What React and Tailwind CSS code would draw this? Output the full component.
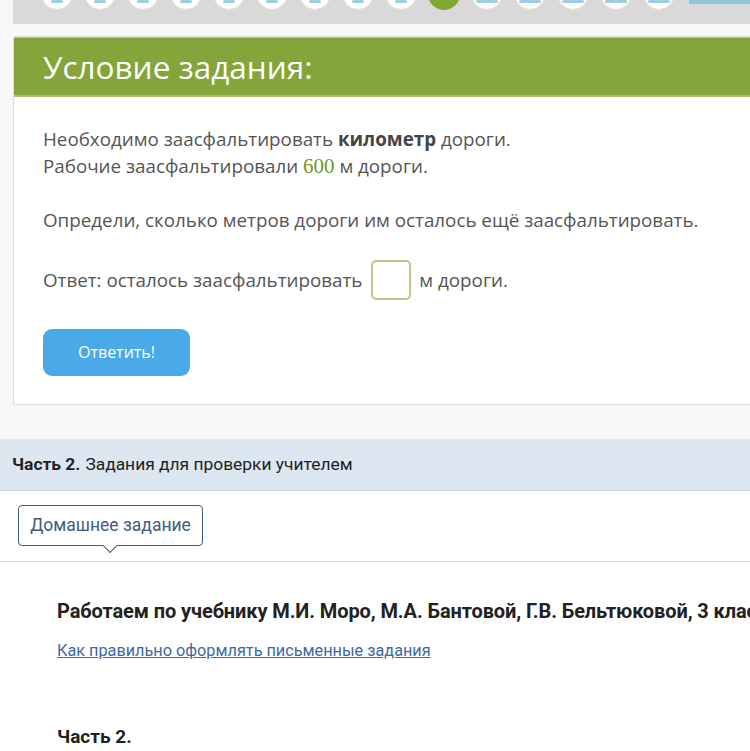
import React from "react";

const Circle = ({ active, wide }) => (
  <div
    className={
      "w-[32px] h-[32px] rounded-full shrink-0 flex items-end justify-center pb-[6px] " +
      (active ? "bg-[#7fa833]" : "bg-white border border-[#e6ddd8]")
    }
  >
    {!active && (
      <div className={"h-[3px] rounded bg-[#9ccfe3] " + (wide ? "w-[22px]" : "w-[12px]")} />
    )}
  </div>
);

export default function App() {
  const items = Array.from({ length: 15 }, (_, i) => i);
  return (
    <div className="w-[750px] h-[751px] overflow-hidden bg-[#f8f8f8]" style={{ fontFamily: "'Open Sans', sans-serif" }}>
      {/* top progress strip */}
      <div className="ml-[13px] h-[24px] bg-[#d9d9d9] overflow-hidden flex">
        <div className="flex gap-[11px] pl-[28px] -mt-[22px]">
          {items.map((i) => (
            <Circle key={i} active={i === 9} wide={i > 9} />
          ))}
        </div>
        <div className="ml-[14px] flex-1 h-[4px] bg-[#8ec5dc]" />
      </div>

      {/* task card */}
      <div className="ml-[13px] mt-[12px] border border-[#dedede] border-r-0 bg-white">
        <div className="h-[60px] bg-[#83a53a] border-t border-[#b5cc85] border-b-2 border-b-[#a8c46a] flex items-center pl-[29px]">
          <h1 className="text-[31.5px] text-white font-normal leading-none">Условие задания:</h1>
        </div>
        <div className="pl-[29px] pt-[29px] pb-[28px] text-[18.8px] leading-[27px] text-[#555555]">
          <p>
            Необходимо заасфальтировать <b className="font-bold text-[#444]">километр</b> дороги.
          </p>
          <p>
            Рабочие заасфальтировали{" "}
            <span className="text-[21px] text-[#6f9a2b]" style={{ fontFamily: "'Liberation Serif', serif" }}>
              600
            </span>{" "}
            м дороги.
          </p>
          <p className="mt-[27px]">Определи, сколько метров дороги им осталось ещё заасфальтировать.</p>
          <div className="mt-[26px] flex items-center">
            <span>Ответ: осталось заасфальтировать</span>
            <div className="ml-[9px] mr-[8px] w-[40px] h-[40px] rounded-[5px] border-2 border-[#b5c989]" />
            <span>м дороги.</span>
          </div>
          <button className="mt-[29px] w-[147px] h-[47px] rounded-[9px] bg-[#4aa9e9] text-white text-[16px] flex items-center justify-center">
            Ответить!
          </button>
        </div>
      </div>

      {/* part 2 band */}
      <div className="mt-[34px] h-[52px] bg-[#dde7f1] border-b border-[#cfd9e3] flex items-center pl-[12px] text-[17.4px] text-[#222]" style={{ fontFamily: "Roboto, sans-serif" }}>
        <b className="font-bold">Часть 2.</b>
        <span className="ml-[5px]">Задания для проверки учителем</span>
      </div>

      <div className="bg-white h-[400px]" style={{ fontFamily: "Roboto, sans-serif" }}>
        <div className="pt-[14px] pl-[18px] pb-[15px] border-b border-[#dcdcdc]">
          <div className="relative w-[185px] h-[41px] rounded-[4px] border border-[#3f5d7f] flex items-center justify-center text-[17.5px] text-[#3f5d7f]">
            Домашнее задание
            <div className="absolute left-[86px] -bottom-[6px] w-[10px] h-[10px] bg-white border-r border-b border-[#3f5d7f] rotate-45" />
          </div>
        </div>
        <div className="pl-[57px] whitespace-nowrap">
          <p className="mt-[34px] text-[20px] font-bold text-[#222] tracking-[-0.1px]">
            Работаем по учебнику М.И. Моро, М.А. Бантовой, Г.В. Бельтюковой, 3 класс
          </p>
          <a className="block mt-[13px] text-[16.25px] text-[#3d6aa0] underline" href="#">
            Как правильно оформлять письменные задания
          </a>
          <p className="mt-[60px] text-[19px] font-bold text-[#222]">Часть 2.</p>
        </div>
      </div>
    </div>
  );
}
